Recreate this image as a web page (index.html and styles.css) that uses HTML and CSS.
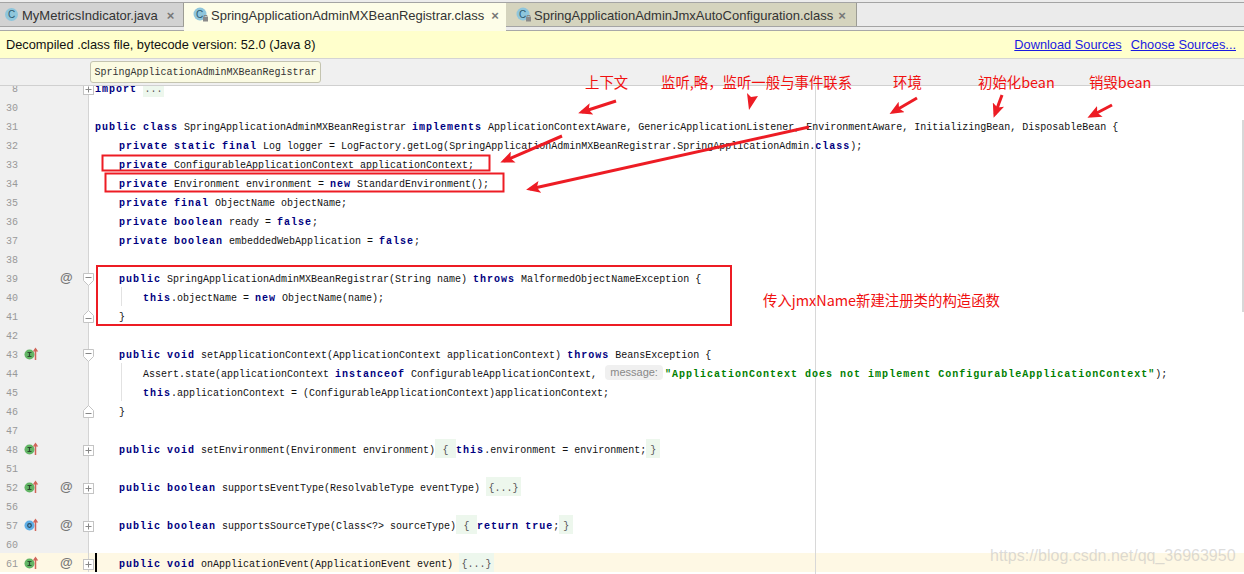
FILE: index.html
```html
<!DOCTYPE html>
<html lang="en">
<head>
    <meta charset="UTF-8">
    <meta name="viewport" content="width=device-width, initial-scale=1.0">
    <title>SpringApplicationAdminMXBeanRegistrar.class</title>
    <link rel="stylesheet" href="styles.css">
</head>
<body>
    <svg class="defs" width="0" height="0">
        <defs>
            <symbol id="impl" viewBox="0 0 16 16">
                <circle cx="5.5" cy="8.5" r="5" fill="#62b565"/>
                <path d="M3.5 6.5h4M3.5 10.5h4M5.5 6.5v4" stroke="#2d4a2e" stroke-width="1.2" fill="none"/>
                <path d="M11.5 14V3" stroke="#d0655a" stroke-width="1.5"/>
                <path d="M8.8 5.5 11.5 1.5 14.2 5.5z" fill="#d0655a"/>
            </symbol>
            <symbol id="over" viewBox="0 0 16 16">
                <circle cx="5.5" cy="8.5" r="5" fill="#5eaee6"/>
                <circle cx="5.5" cy="8.5" r="1.8" fill="none" stroke="#2d4a5e" stroke-width="1.2"/>
                <path d="M11.5 14V3" stroke="#d0655a" stroke-width="1.5"/>
                <path d="M8.8 5.5 11.5 1.5 14.2 5.5z" fill="#d0655a"/>
            </symbol>
            <symbol id="plus" viewBox="0 0 11 11">
                <rect x="0.5" y="0.5" width="10" height="10" fill="#fff" stroke="#c4c4c4"/>
                <path d="M2.5 5.5h6M5.5 2.5v6" stroke="#888"/>
            </symbol>
            <symbol id="open" viewBox="0 0 11 13">
                <path d="M.5.5h10v7l-5 5-5-5z" fill="#fff" stroke="#c4c4c4"/>
                <path d="M2.5 4.5h6" stroke="#888"/>
            </symbol>
            <symbol id="close" viewBox="0 0 11 13">
                <path d="M.5 12.5h10v-7l-5-5-5 5z" fill="#fff" stroke="#c4c4c4"/>
                <path d="M2.5 8.5h6" stroke="#888"/>
            </symbol>
            <symbol id="cls" viewBox="0 0 16 16">
                <circle cx="7.5" cy="7.5" r="6.5" fill="#8fc6dc"/>
                <text x="7.5" y="11" text-anchor="middle" class="tab-c">C</text>
            </symbol>
            <symbol id="clslock" viewBox="0 0 16 16">
                <circle cx="7" cy="7" r="6.5" fill="#8fc6dc"/>
                <text x="6.5" y="10.5" text-anchor="middle" class="tab-c">C</text>
                <rect x="10" y="10" width="5" height="4.5" fill="#8a8a8a"/>
                <path d="M11 10V8.5h3V10" fill="none" stroke="#8a8a8a"/>
            </symbol>
            <marker id="head" markerUnits="userSpaceOnUse" markerWidth="15" markerHeight="12" refX="10" refY="6" orient="auto">
                <path d="M0 0 14 6 0 12 3 6z" fill="#ed1c24"/>
            </marker>
        </defs>
    </svg>

    <div class="tabs">
        <div class="tab-row">
            <div class="tab tab-first"><svg class="tab-icon"><use href="#cls"/></svg>MyMetricsIndicator.java<span class="tab-x">&#215;</span></div>
            <div class="tab tab-active"><svg class="tab-icon"><use href="#clslock"/></svg>SpringApplicationAdminMXBeanRegistrar.class<span class="tab-x">&#215;</span></div>
            <div class="tab tab-last"><svg class="tab-icon"><use href="#clslock"/></svg>SpringApplicationAdminJmxAutoConfiguration.class<span class="tab-x">&#215;</span></div>
        </div>
    </div>

    <div class="banner">
        <span>Decompiled .class file, bytecode version: 52.0 (Java 8)</span>
        <div class="banner-links">
            <a href="#">Download Sources</a>
            <a href="#">Choose Sources...</a>
        </div>
    </div>

    <div class="crumb">
        <div class="tooltip">SpringApplicationAdminMXBeanRegistrar</div>
    </div>

    <div class="editor">
        <div class="margin-line"></div>
        <div class="scroll-edge"></div>
        <div class="lines">
            <div class="row"><div class="gutter"><span class="num">8</span></div><svg class="fold"><use href="#plus"/></svg><code><b>import</b> <span class="fold-open">...</span></code></div>
            <div class="row"><div class="gutter"><span class="num">30</span></div><code></code></div>
            <div class="row"><div class="gutter"><span class="num">31</span></div><code><b>public</b> <b>class</b> SpringApplicationAdminMXBeanRegistrar <b>implements</b> ApplicationContextAware, GenericApplicationListener, EnvironmentAware, InitializingBean, DisposableBean {</code></div>
            <div class="row"><div class="gutter"><span class="num">32</span></div><code>    <b>private</b> <b>static</b> <b>final</b> Log logger = LogFactory.getLog(SpringApplicationAdminMXBeanRegistrar.SpringApplicationAdmin.<b>class</b>);</code></div>
            <div class="row"><div class="gutter"><span class="num">33</span></div><code>    <b>private</b> ConfigurableApplicationContext applicationContext;</code></div>
            <div class="row"><div class="gutter"><span class="num">34</span></div><code>    <b>private</b> Environment environment = <b>new</b> StandardEnvironment();</code></div>
            <div class="row"><div class="gutter"><span class="num">35</span></div><code>    <b>private</b> <b>final</b> ObjectName objectName;</code></div>
            <div class="row"><div class="gutter"><span class="num">36</span></div><code>    <b>private</b> <b>boolean</b> ready = <b>false</b>;</code></div>
            <div class="row"><div class="gutter"><span class="num">37</span></div><code>    <b>private</b> <b>boolean</b> embeddedWebApplication = <b>false</b>;</code></div>
            <div class="row"><div class="gutter"><span class="num">38</span></div><code></code></div>
            <div class="row"><div class="gutter"><span class="num">39</span><span class="ann">@</span></div><svg class="fold fold-open-icon"><use href="#open"/></svg><code>    <b>public</b> SpringApplicationAdminMXBeanRegistrar(String name) <b>throws</b> MalformedObjectNameException {</code></div>
            <div class="row guide"><div class="gutter"><span class="num">40</span></div><code>        <b>this</b>.objectName = <b>new</b> ObjectName(name);</code></div>
            <div class="row"><div class="gutter"><span class="num">41</span></div><svg class="fold fold-close-icon"><use href="#close"/></svg><code>    }</code></div>
            <div class="row"><div class="gutter"><span class="num">42</span></div><code></code></div>
            <div class="row"><div class="gutter"><span class="num">43</span><svg class="impl"><use href="#impl"/></svg></div><svg class="fold fold-open-icon"><use href="#open"/></svg><code>    <b>public</b> <b>void</b> setApplicationContext(ApplicationContext applicationContext) <b>throws</b> BeansException {</code></div>
            <div class="row guide"><div class="gutter"><span class="num">44</span></div><code>        Assert.state(applicationContext <b>instanceof</b> ConfigurableApplicationContext,<span class="hint">message:</span><b class="str">"ApplicationContext does not implement ConfigurableApplicationContext"</b>);</code></div>
            <div class="row guide"><div class="gutter"><span class="num">45</span></div><code>        <b>this</b>.applicationContext = (ConfigurableApplicationContext)applicationContext;</code></div>
            <div class="row"><div class="gutter"><span class="num">46</span></div><svg class="fold fold-close-icon"><use href="#close"/></svg><code>    }</code></div>
            <div class="row"><div class="gutter"><span class="num">47</span></div><code></code></div>
            <div class="row"><div class="gutter"><span class="num">48</span><svg class="impl"><use href="#impl"/></svg></div><svg class="fold"><use href="#plus"/></svg><code>    <b>public</b> <b>void</b> setEnvironment(Environment environment)<span class="fold-open">{</span><b>this</b>.environment = environment;<span class="fold-close">}</span></code></div>
            <div class="row"><div class="gutter"><span class="num">51</span></div><code></code></div>
            <div class="row"><div class="gutter"><span class="num">52</span><svg class="impl"><use href="#impl"/></svg><span class="ann">@</span></div><svg class="fold"><use href="#plus"/></svg><code>    <b>public</b> <b>boolean</b> supportsEventType(ResolvableType eventType) <span class="folded">{...}</span></code></div>
            <div class="row"><div class="gutter"><span class="num">56</span></div><code></code></div>
            <div class="row"><div class="gutter"><span class="num">57</span><svg class="impl"><use href="#over"/></svg><span class="ann">@</span></div><svg class="fold"><use href="#plus"/></svg><code>    <b>public</b> <b>boolean</b> supportsSourceType(Class&lt;?&gt; sourceType)<span class="fold-open">{</span><b>return</b> <b>true</b>;<span class="fold-close">}</span></code></div>
            <div class="row"><div class="gutter"><span class="num">60</span></div><code></code></div>
            <div class="row row-current"><div class="gutter"><span class="num">61</span><svg class="impl"><use href="#impl"/></svg><span class="ann">@</span></div><svg class="fold"><use href="#plus"/></svg><code>    <b>public</b> <b>void</b> onApplicationEvent(ApplicationEvent event) <span class="folded">{...}</span></code></div>
        </div>
    </div>

    <!-- hand drawn notes on top of the screenshot -->
    <svg class="marks" width="1244" height="574">
        <g fill="none" stroke="#ed1c24" stroke-width="2">
            <rect x="102.5" y="155.5" width="387" height="15"/>
            <rect x="105.5" y="173.5" width="398" height="18"/>
            <rect x="97" y="266" width="634" height="59"/>
        </g>
        <g stroke="#ed1c24" stroke-width="3" marker-end="url(#head)">
            <line x1="616" y1="101" x2="582" y2="112"/>
            <line x1="917" y1="98" x2="893" y2="112"/>
            <line x1="1002" y1="95" x2="995" y2="114"/>
            <line x1="1112" y1="105" x2="1091" y2="116"/>
            <line x1="562" y1="136" x2="504" y2="161"/>
            <line x1="809" y1="127" x2="530" y2="189"/>
        </g>
        <polygon points="747,93 751,97 758,96 749,110" fill="#ed1c24"/>
    </svg>
    <span class="note note-context">上下文</span>
    <span class="note note-listen">监听,略，监听一般与事件联系</span>
    <span class="note note-env">环境</span>
    <span class="note note-init">初始化bean</span>
    <span class="note note-destroy">销毁bean</span>
    <span class="note note-ctor">传入jmxName新建注册类的构造函数</span>
    <span class="watermark">https://blog.csdn.net/qq_36963950</span>
</body>
</html>
```

FILE: styles.css
```css
html, body {
    margin: 0;
    padding: 0;
    height: 574px;
    overflow: hidden;
}
body {
    position: relative;
    background: #fff;
    font-family: "Liberation Sans", Arial, sans-serif;
    font-size: 13px;
    color: #222;
}
.defs {
    position: absolute;
}
.tab-c {
    font: 10px "Liberation Sans", sans-serif;
    fill: #2c5a70;
}

/* tabs */
.tabs {
    height: 31px;
    box-sizing: border-box;
    padding-top: 2px;
    background: #ececec;
    border-bottom: 1px solid #a8a8a8;
}
.tab-row {
    display: flex;
    height: 25px;
    box-sizing: border-box;
    background: #ebebeb;
    border-top: 1px solid #a4a4a4;
    border-bottom: 1px solid #a4a4a4;
}
.tab {
    display: flex;
    align-items: center;
    box-sizing: border-box;
    border-right: 1px solid #9c9c94;
    color: #333;
    line-height: 17px;
    padding-top: 1px;
}
.tab-first {
    width: 184px;
    padding-left: 4px;
    background: #d2d2d2;
}
.tab-first .tab-x {
    margin-left: 9px;
}
.tab-active {
    position: relative;
    width: 322px;
    height: 28px;
    padding: 1px 0 5px 9px;
    background: #fdfde8;
    border-right: 0;
    margin-bottom: -5px;
}
.tab-last {
    width: 351px;
    padding-left: 10px;
    background: #d5d4be;
}
.tab-last .tab-x {
    margin-left: 5px;
}
.tab-icon {
    width: 16px;
    height: 16px;
    margin: -1px 2px 0 0;
}
.tab-x {
    margin-left: 7px;
    color: #777;
    font-weight: bold;
    font-size: 13px;
}

/* decompiled banner */
.banner {
    display: flex;
    justify-content: space-between;
    align-items: center;
    height: 28px;
    box-sizing: border-box;
    padding: 0 8px 0 6px;
    background: #ffffcc;
    border-bottom: 1px solid #d4d4d4;
    color: #111;
    font-size: 12.8px;
}
.banner-links {
    display: flex;
    gap: 9px;
}
.banner-links a {
    color: #1a1ae0;
}

.crumb {
    height: 27px;
    padding: 2px 0 0 90px;
    box-sizing: border-box;
    background: #f0f0f0;
    border-bottom: 1px solid #d0d0d0;
}
.tooltip {
    width: 231px;
    height: 22px;
    box-sizing: border-box;
    border: 1px solid #c4c4b0;
    border-radius: 3px;
    background: #fbfbe2;
    font: 10px/22px "Liberation Mono", monospace;
    text-align: center;
    color: #333;
}

/* editor */
.editor {
    position: relative;
    height: 488px;
    overflow: hidden;
}
.margin-line {
    position: absolute;
    top: 0;
    bottom: 0;
    left: 815px;
    width: 1px;
    background: #d8d8d8;
    z-index: 1;
}
.scroll-edge {
    position: absolute;
    top: 34px;
    right: 0;
    width: 2px;
    height: 192px;
    background: #d8d8d8;
}
.lines {
    margin-top: -8px;
}
.row {
    position: relative;
    display: flex;
    height: 19px;
    font: 10px/23px "Liberation Mono", monospace;
    color: #111;
}
.gutter {
    position: relative;
    width: 88px;
    flex: none;
    background: #f0f0f0;
    border-right: 1px solid #d4d4d4;
}
.num {
    display: block;
    width: 18px;
    text-align: right;
    color: #999;
}
.impl {
    position: absolute;
    left: 24px;
    top: 2px;
    width: 16px;
    height: 16px;
}
.ann {
    position: absolute;
    left: 60px;
    top: 0;
    font: bold 13px/19px "Liberation Sans", sans-serif;
    color: #777;
}
.fold {
    position: absolute;
    left: 83px;
    top: 6px;
    width: 11px;
    height: 11px;
    z-index: 2;
}
.fold-open-icon {
    top: 5px;
    height: 13px;
}
.fold-close-icon {
    top: 4px;
    height: 13px;
}
code {
    position: relative;
    z-index: 2;
    padding-left: 6px;
    white-space: pre;
    font: inherit;
}
b {
    font-weight: bold;
    letter-spacing: 1px;
    color: #000080;
}
b.str {
    color: #008000;
}
.folded, .fold-open, .fold-close {
    display: inline-block;
    height: 19px;
    background: #edf7ed;
    color: #555;
    vertical-align: top;
    text-align: center;
}
.folded {
    padding: 0 2.5px;
}
.fold-open {
    width: 21px;
}
.fold-close {
    width: 14px;
}
.hint {
    display: inline-block;
    width: 58px;
    height: 15px;
    margin: 0 2px 0 8px;
    border-radius: 4px;
    background: #f0f0f0;
    font: 11px/15px "Liberation Sans", sans-serif;
    color: #888;
    text-align: center;
    vertical-align: 1px;
}
.guide::before {
    content: "";
    position: absolute;
    left: 121px;
    top: 0;
    bottom: 0;
    width: 1px;
    background: #e2e2e2;
}
.row-current {
    background: #fef8e4;
}
.row-current .gutter {
    background: #fef8e4;
}
.row-current code::before {
    content: "";
    position: absolute;
    left: 6px;
    top: 0;
    width: 2px;
    height: 19px;
    background: #000;
}

/* notes */
.marks {
    position: absolute;
    top: 0;
    left: 0;
    z-index: 3;
}
.note {
    position: absolute;
    z-index: 4;
    font: 14.4px/18px "Noto Sans CJK SC", sans-serif;
    color: #f01010;
    white-space: nowrap;
}
.note-context { left: 585px; top: 73px; }
.note-listen { left: 661px; top: 73px; }
.note-env { left: 893px; top: 73px; }
.note-init { left: 978px; top: 73px; }
.note-destroy { left: 1089px; top: 73px; }
.note-ctor { left: 763px; top: 291px; }
.watermark {
    position: absolute;
    z-index: 4;
    left: 990px;
    top: 546px;
    font: 16px/20px "Liberation Sans", sans-serif;
    color: rgba(190, 190, 190, 0.55);
    white-space: nowrap;
}
```
